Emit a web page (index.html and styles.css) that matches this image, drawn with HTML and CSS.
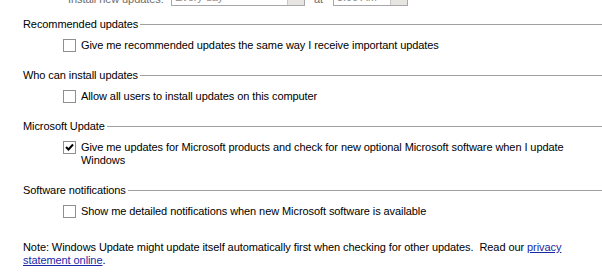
FILE: index.html
```html
<!DOCTYPE html>
<html>
<head>
<meta charset="utf-8">
<link rel="stylesheet" href="styles.css">
</head>
<body>
<div class="page">
  <div class="schedule">
    <span class="sched-label">Install new updates:</span>
    <div class="combo combo-day"><span class="combo-text">Every day</span><span class="combo-btn"></span></div>
    <span class="at">at</span>
    <div class="combo combo-time"><span class="combo-text">3:00 AM</span><span class="combo-btn"></span></div>
  </div>

  <section class="group">
    <div class="group-head"><span>Recommended updates</span><span class="rule"></span></div>
    <label class="option"><span class="box"></span><span class="opt-text">Give me recommended updates the same way I receive important updates</span></label>
  </section>

  <section class="group">
    <div class="group-head"><span>Who can install updates</span><span class="rule"></span></div>
    <label class="option"><span class="box"></span><span class="opt-text">Allow all users to install updates on this computer</span></label>
  </section>

  <section class="group">
    <div class="group-head"><span>Microsoft Update</span><span class="rule"></span></div>
    <label class="option"><span class="box checked"><svg viewBox="0 0 11 11" width="11" height="11"><path d="M2 5 L4.5 7.5 L9 2.5" fill="none" stroke="#000" stroke-width="2"/></svg></span><span class="opt-text">Give me updates for Microsoft products and check for new optional Microsoft software when I update Windows</span></label>
  </section>

  <section class="group">
    <div class="group-head"><span>Software notifications</span><span class="rule"></span></div>
    <label class="option"><span class="box"></span><span class="opt-text">Show me detailed notifications when new Microsoft software is available</span></label>
  </section>

  <p class="note">Note: Windows Update might update itself automatically first when checking for other updates.&nbsp; Read our <a href="#">privacy statement online</a>.</p>
</div>
</body>
</html>
```
FILE: styles.css
```css
html, body {
  margin: 0;
  padding: 0;
  background: #fff;
  overflow: hidden;
}
.page {
  font-family: "Liberation Sans", Arial, sans-serif;
  font-size: 11px;
  line-height: 13px;
  letter-spacing: -0.08px;
  color: #000;
  padding-left: 23px;
}
.schedule {
  display: flex;
  align-items: flex-end;
  margin-top: -15px;
  height: 21px;
  padding-left: 45px;
  color: #6d6d6d;
}
.sched-label { width: 103px; }
.combo {
  display: flex;
  align-items: flex-end;
  height: 19px;
  border: 1px solid #a7a6aa;
  background: #fff;
  box-sizing: content-box;
}
.combo-day { width: 132px; }
.combo-time { width: 73px; }
.combo-text {
  flex: 1;
  padding-left: 3px;
  padding-bottom: 1px;
  color: #8d8d8d;
}
.combo-btn {
  align-self: stretch;
  width: 16px;
  background: #e6e5e2;
  border-left: 1px solid #c8c7c2;
}
.at { margin: 0 10px 0 9px; }

.group { margin-top: 17px; }
.schedule + .group { margin-top: 12px; }
.group-head {
  display: flex;
  align-items: center;
  height: 13px;
}
.rule {
  flex: 1;
  height: 0;
  border-top: 1px solid #a0a0a0;
  margin-left: 2px;
}
.option {
  display: flex;
  align-items: flex-start;
  margin-top: 8px;
  padding-left: 40px;
  padding-right: 22px;
}
.box {
  flex: none;
  width: 11px;
  height: 11px;
  border: 1px solid #8e8f8f;
  background: #fff;
  margin-right: 5px;
  display: flex;
}
.opt-text { flex: 1; }
.note {
  margin: 23px 0 0;
  padding-right: 22px;
}
.note a { color: #1a27a6; }
```
